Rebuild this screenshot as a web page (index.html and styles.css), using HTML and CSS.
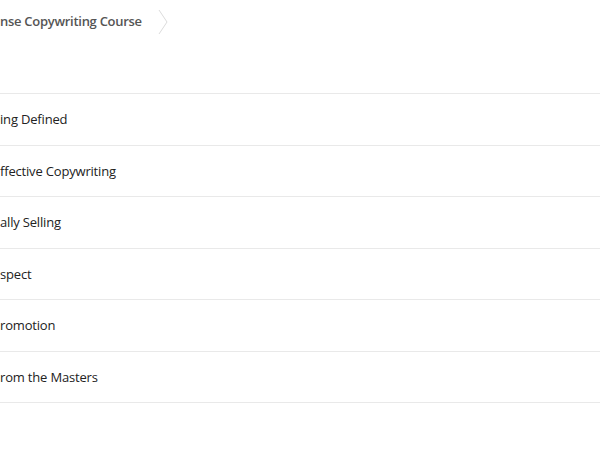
FILE: index.html
```html
<!DOCTYPE html>
<html lang="en">
<head>
    <meta charset="UTF-8">
    <meta name="viewport" content="width=device-width, initial-scale=1.0">
    <title>Copywriting Course</title>

    <!-- Custom CSS -->
    <link rel="stylesheet" href="styles.css">
</head>
<body>

    <!-- Breadcrumb -->
    <div class="crumbs">
        <span class="crumb">nse Copywriting Course</span>
        <svg class="crumb-sep" width="10" height="26" viewBox="0 0 10 26">
            <path d="M1 1 L9 13 L1 25" fill="none" stroke="#dcdcdc" stroke-width="1"/>
        </svg>
    </div>

    <!-- Lessons -->
    <ul class="lessons">
        <li>ing Defined</li>
        <li>ffective Copywriting</li>
        <li>ally Selling</li>
        <li>spect</li>
        <li>romotion</li>
        <li>rom the Masters</li>
    </ul>

</body>
</html>
```

FILE: styles.css
```css
body, html {
    margin: 0;
    padding: 0;
    background: #fff;
    font-family: 'Open Sans', 'Liberation Sans', sans-serif;
    color: #222;
}

.crumbs {
    display: flex;
    align-items: center;
    height: 42px;
}

.crumb {
    font-size: 13px;
    font-weight: 600;
    letter-spacing: -0.28px;
    color: #555;
}

.crumb-sep {
    margin-left: 16px;
    margin-top: 2px;
}

.lessons {
    list-style: none;
    margin: 51px 0 0;
    padding: 0;
    border-top: 1px solid #e9e9e9;
}

.lessons li {
    font-size: 13px;
    letter-spacing: -0.18px;
    line-height: 20px;
    padding: 15px 0 15.5px;
    border-bottom: 1px solid #e9e9e9;
}
```
